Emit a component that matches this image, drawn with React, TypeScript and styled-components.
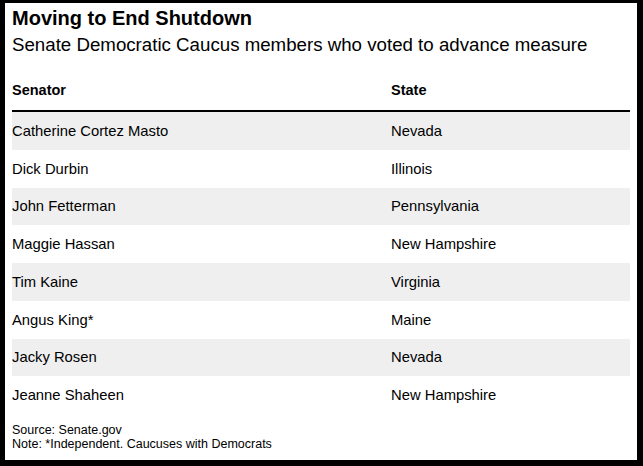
import React from "react";
import styled, { createGlobalStyle } from "styled-components";

const GlobalStyle = createGlobalStyle`
  html, body {
    margin: 0;
    padding: 0;
    background: #000;
  }
  body {
    font-family: "Liberation Sans", Arial, sans-serif;
    color: #000;
  }
`;

const Frame = styled.div`
  box-sizing: border-box;
  margin: 3px 6px 0 5px;
  height: 457px;
  background: #fff;
  padding: 4px 7px 0 7px;
  display: flex;
  flex-direction: column;
`;

const Title = styled.h1`
  margin: 0;
  font-size: 20px;
  line-height: 22px;
  font-weight: 700;
  letter-spacing: 0;
`;

const Subtitle = styled.h2`
  margin: 5px 0 0 0;
  font-size: 18.7px;
  line-height: 22px;
  font-weight: 400;
`;

const Table = styled.div`
  margin-top: 25px;
  display: flex;
  flex-direction: column;
`;

const HeaderRow = styled.div`
  display: grid;
  grid-template-columns: 379px 1fr;
  padding-bottom: 11px;
  border-bottom: 2px solid #000;
`;

const HeaderCell = styled.div`
  font-size: 14.5px;
  line-height: 18px;
  font-weight: 700;
`;

const Row = styled.div<{ $shaded: boolean }>`
  display: grid;
  grid-template-columns: 379px 1fr;
  align-items: center;
  height: 37.75px;
  background: ${(p) => (p.$shaded ? "#efefef" : "#fff")};
`;

const Cell = styled.div`
  font-size: 14.8px;
  line-height: 18px;
`;

const Footer = styled.div`
  margin-top: 9px;
  font-size: 12.5px;
  line-height: 14px;
`;

const rows: [string, string][] = [
  ["Catherine Cortez Masto", "Nevada"],
  ["Dick Durbin", "Illinois"],
  ["John Fetterman", "Pennsylvania"],
  ["Maggie Hassan", "New Hampshire"],
  ["Tim Kaine", "Virginia"],
  ["Angus King*", "Maine"],
  ["Jacky Rosen", "Nevada"],
  ["Jeanne Shaheen", "New Hampshire"],
];

export default function App() {
  return (
    <>
      <GlobalStyle />
      <Frame>
        <Title>Moving to End Shutdown</Title>
        <Subtitle>Senate Democratic Caucus members who voted to advance measure</Subtitle>
        <Table>
          <HeaderRow>
            <HeaderCell>Senator</HeaderCell>
            <HeaderCell>State</HeaderCell>
          </HeaderRow>
          {rows.map(([name, state], i) => (
            <Row key={name} $shaded={i % 2 === 0}>
              <Cell>{name}</Cell>
              <Cell>{state}</Cell>
            </Row>
          ))}
        </Table>
        <Footer>
          <div>Source: Senate.gov</div>
          <div>Note: *Independent. Caucuses with Democrats</div>
        </Footer>
      </Frame>
    </>
  );
}
